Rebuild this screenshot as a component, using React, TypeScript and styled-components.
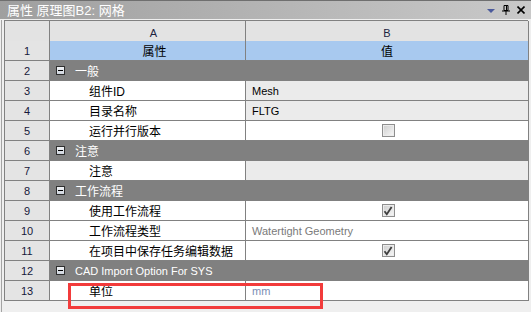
import React, { ReactElement } from 'react';
import styled, { createGlobalStyle } from 'styled-components';

type ValueKind = 'text' | 'check' | 'uncheck' | 'muted' | 'unit' | 'none';

interface ItemRow {
  n: number;
  kind: 'group' | 'item';
  label: string;
  latin?: boolean;
  value?: string;
  valueKind?: ValueKind;
  shaded?: boolean;
}

const ROWS: ItemRow[] = [
  { n: 2, kind: 'group', label: '一般' },
  { n: 3, kind: 'item', label: '组件ID', value: 'Mesh', valueKind: 'text', shaded: true },
  { n: 4, kind: 'item', label: '目录名称', value: 'FLTG', valueKind: 'text', shaded: true },
  { n: 5, kind: 'item', label: '运行并行版本', valueKind: 'uncheck' },
  { n: 6, kind: 'group', label: '注意' },
  { n: 7, kind: 'item', label: '注意', valueKind: 'none', shaded: true },
  { n: 8, kind: 'group', label: '工作流程' },
  { n: 9, kind: 'item', label: '使用工作流程', valueKind: 'check' },
  { n: 10, kind: 'item', label: '工作流程类型', value: 'Watertight Geometry', valueKind: 'muted' },
  { n: 11, kind: 'item', label: '在项目中保存任务编辑数据', valueKind: 'check' },
  { n: 12, kind: 'group', label: 'CAD Import Option For SYS', latin: true },
  { n: 13, kind: 'item', label: '单位', value: 'mm', valueKind: 'unit' },
];

const LINE = '#818181';
const FONT = '"Liberation Sans", "Noto Sans CJK SC", sans-serif';

const GlobalStyle = createGlobalStyle`
  html, body {
    margin: 0;
    padding: 0;
    background: #efefef;
  }
  * {
    box-sizing: border-box;
  }
`;

const Window = styled.div`
  width: 531px;
  height: 312px;
  display: flex;
  flex-direction: column;
  font-family: ${FONT};
  overflow: hidden;
`;

const TitleBar = styled.div`
  height: 19px;
  border-top: 1px solid #6f6f6f;
  background: linear-gradient(to right, #9f9f9f, #c9c9c9);
  display: flex;
  align-items: center;
  padding: 0 6px 0 7px;
`;

const Title = styled.div`
  flex: 1;
  color: #ffffff;
  font-size: 13px;
  line-height: 17px;
  white-space: nowrap;
`;

const TitleTools = styled.div`
  display: flex;
  align-items: center;
  gap: 7px;
`;

const Frame = styled.div`
  flex: 1;
  margin-top: 1px;
  margin-left: 1px;
  border-left: 1px solid #a4a4a4;
  padding-left: 2px;
`;

const TableWrap = styled.div`
  position: relative;
  width: 524px;
`;

const Table = styled.div`
  display: grid;
  grid-template-columns: 45px 196px 283px;
  grid-auto-rows: 20px;
  border-left: 1px solid ${LINE};
  border-top: 1px solid ${LINE};
`;

const Cell = styled.div`
  border-right: 1px solid ${LINE};
  border-bottom: 1px solid ${LINE};
  display: flex;
  align-items: center;
  white-space: nowrap;
  overflow: hidden;
`;

const HeadCell = styled(Cell)<{ $shift?: number }>`
  height: 24px;
  background: #e3e3e3;
  justify-content: center;
  padding-left: ${({ $shift }) => $shift ?? 0}px;
  font-size: 11px;
  color: #1c2440;
`;

const NumCell = styled(Cell)`
  background: #e4e4e4;
  justify-content: center;
  font-size: 11px;
  color: #16183a;
`;

const CaptionCell = styled(Cell)<{ $shift?: number }>`
  background: #a8c9ef;
  justify-content: center;
  padding-left: ${({ $shift }) => $shift ?? 0}px;
  font-size: 12px;
  color: #000000;
`;

const GroupCell = styled(Cell)`
  grid-column: span 2;
  background: #808080;
  border-right-color: #808080;
  border-bottom-color: #808080;
  padding-left: 6px;
  gap: 10px;
  color: #ffffff;
`;

const GroupLabel = styled.span<{ $latin?: boolean }>`
  font-size: ${({ $latin }) => ($latin ? '11px' : '12px')};
`;

const Toggle = styled.span`
  width: 9px;
  height: 9px;
  border: 1px solid #2e2e2e;
  background: linear-gradient(#f2f4f7, #cfd5de);
  display: flex;
  align-items: center;
  justify-content: center;

  &::after {
    content: '';
    width: 5px;
    height: 1px;
    background: #000000;
  }
`;

const LabelCell = styled(Cell)`
  background: #ffffff;
  padding-left: 39px;
  font-size: 12px;
  color: #000000;
`;

const ValueCell = styled(Cell)<{ $shaded?: boolean; $tone: ValueKind }>`
  background: ${({ $shaded }) => ($shaded ? '#ebebeb' : '#ffffff')};
  padding-left: 6px;
  justify-content: ${({ $tone }) => ($tone === 'check' || $tone === 'uncheck' ? 'center' : 'flex-start')};
  font-size: 11px;
  color: ${({ $tone }) => ($tone === 'muted' ? '#7a7a7a' : $tone === 'unit' ? '#7b8db4' : '#000000')};
`;

const CheckBox = styled.span`
  width: 13px;
  height: 13px;
  border: 1px solid #8e8e8e;
  background: linear-gradient(135deg, #cdcdcd, #f8f8f8);
  box-shadow: inset 0 0 0 1px #ececec;
  display: flex;
  align-items: center;
  justify-content: center;
  margin-left: -4px;
`;

const Highlight = styled.div`
  position: absolute;
  left: 64px;
  top: 263px;
  width: 255px;
  height: 26px;
  border: 3px solid #f23b3b;
  pointer-events: none;
`;

function DropIcon(): ReactElement {
  return (
    <svg width="8" height="5" viewBox="0 0 8 5">
      <path d="M0 1h8L4 5z" fill="#4b5a9c" />
    </svg>
  );
}

function PinIcon(): ReactElement {
  return (
    <svg width="8" height="10" viewBox="0 0 8 10">
      <path d="M2 0.5h4v5h-4z" fill="none" stroke="#000" />
      <path d="M4.5 1v4.5" stroke="#000" />
      <path d="M0 6h8" stroke="#000" />
      <path d="M4 6v4" stroke="#000" />
    </svg>
  );
}

function CloseIcon(): ReactElement {
  return (
    <svg width="8" height="8" viewBox="0 0 8 8">
      <path d="M0.5 0.5l7 7M7.5 0.5l-7 7" stroke="#000" strokeWidth="1.6" />
    </svg>
  );
}

function Tick(): ReactElement {
  return (
    <svg width="10" height="10" viewBox="0 0 10 10">
      <path d="M1.5 5.2l2.3 3 4.8-7.2" fill="none" stroke="#3e3e3e" strokeWidth="1.8" />
    </svg>
  );
}

function renderValue(row: ItemRow): ReactElement | string | null {
  if (row.valueKind === 'check') {
    return <CheckBox><Tick /></CheckBox>;
  }
  if (row.valueKind === 'uncheck') {
    return <CheckBox />;
  }
  return row.value ?? null;
}

function App(): ReactElement {
  return (
    <Window>
      <GlobalStyle />
      <TitleBar>
        <Title>属性 原理图B2: 网格</Title>
        <TitleTools>
          <DropIcon />
          <PinIcon />
          <CloseIcon />
        </TitleTools>
      </TitleBar>
      <Frame>
        <TableWrap>
          <Table>
            <HeadCell />
            <HeadCell $shift={12}>A</HeadCell>
            <HeadCell>B</HeadCell>

            <NumCell>1</NumCell>
            <CaptionCell $shift={14}>属性</CaptionCell>
            <CaptionCell>值</CaptionCell>

            {ROWS.map((row) => (
              <React.Fragment key={row.n}>
                <NumCell>{row.n}</NumCell>
                {row.kind === 'group' ? (
                  <GroupCell>
                    <Toggle />
                    <GroupLabel $latin={row.latin}>{row.label}</GroupLabel>
                  </GroupCell>
                ) : (
                  <>
                    <LabelCell>{row.label}</LabelCell>
                    <ValueCell $shaded={row.shaded} $tone={row.valueKind ?? 'none'}>
                      {renderValue(row)}
                    </ValueCell>
                  </>
                )}
              </React.Fragment>
            ))}
          </Table>
          <Highlight />
        </TableWrap>
      </Frame>
    </Window>
  );
}

export default App;
